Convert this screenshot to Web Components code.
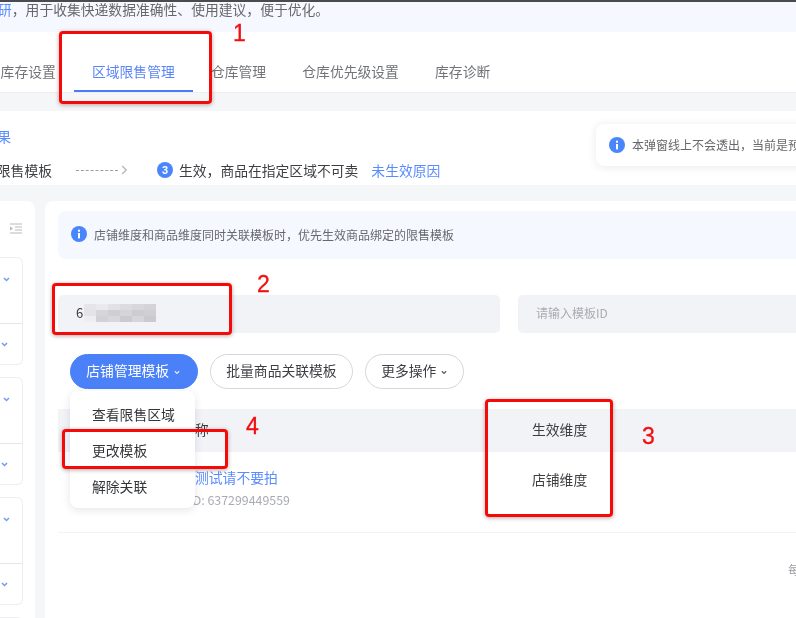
<!DOCTYPE html>
<html lang="zh-CN">
<head>
<meta charset="utf-8">
<title>区域限售管理</title>
<style>
  html, body { margin: 0; padding: 0; background: #f5f6f8; }
  body { font-family: "Noto Sans CJK SC", "Liberation Sans", sans-serif; }
</style>
</head>
<body>

<app-shell>
  <top-banner><a>研</a>，用于收集快递数据准确性、使用建议，便于优化。</top-banner>

  <tab-bar>
    <tab-item>库存设置</tab-item>
    <tab-item active>区域限售管理</tab-item>
    <tab-item>仓库管理</tab-item>
    <tab-item>仓库优先级设置</tab-item>
    <tab-item>库存诊断</tab-item>
  </tab-bar>

  <step-card></step-card>

  <content-row>
    <side-panel>
      <side-card></side-card>
      <side-card></side-card>
      <side-card></side-card>
      <side-card></side-card>
    </side-panel>
    <main-panel>
      <notice-bar>店铺维度和商品维度同时关联模板时，优先生效商品绑定的限售模板</notice-bar>
      <filter-row></filter-row>
      <action-row>
        <pill-btn primary caret>店铺管理模板</pill-btn>
        <pill-btn>批量商品关联模板</pill-btn>
        <pill-btn caret>更多操作</pill-btn>
      </action-row>
      <result-table></result-table>
    </main-panel>
  </content-row>

  <hint-card style="left:596px;top:124px">本弹窗线上不会透出，当前是预</hint-card>
  <drop-menu style="left:70px;top:391px">
    <span>查看限售区域</span>
    <span>更改模板</span>
    <span>解除关联</span>
  </drop-menu>

  <red-box style="left:59px;top:31px;width:153px;height:73px"></red-box>
  <red-num style="left:233px;top:20px">1</red-num>
  <red-box style="left:52px;top:283px;width:180px;height:52px"></red-box>
  <red-num style="left:257px;top:271px">2</red-num>
  <red-box style="left:485px;top:399px;width:128px;height:118px"></red-box>
  <red-num style="left:642px;top:423px">3</red-num>
  <red-box style="left:62px;top:429px;width:166px;height:40px"></red-box>
  <red-num style="left:246px;top:413px">4</red-num>
</app-shell>

<script>
const INFO_ICON = `<svg width="16" height="16" viewBox="0 0 16 16"><circle cx="8" cy="8" r="8" fill="#4a86fb"/><rect x="7" y="7" width="2" height="5.4" fill="#fff"/><rect x="7" y="3.7" width="2" height="2" fill="#fff"/></svg>`;
const CHEVRON = (c, w = 7) => `<svg width="${w}" height="5" viewBox="0 0 7 5"><path d="M1 1l2.5 2.5L6 1" fill="none" stroke="${c}" stroke-width="1.5"/></svg>`;

// small helper, every element is just a style + markup in an open shadow root
function define(name, html, setup) {
  customElements.define(name, class extends HTMLElement {
    constructor() {
      super();
      this.attachShadow({ mode: 'open' });
      this.shadowRoot.innerHTML = html;
    }
    connectedCallback() {
      if (setup) setup(this);
    }
  });
}

define('app-shell', `
  <style>
    :host {
      display: flex;
      flex-direction: column;
      position: relative;
      width: 796px;
      height: 618px;
      overflow: hidden;
      background: #f5f6f8;
      filter: blur(.4px);
    }
  </style>
  <slot></slot>
`);

define('top-banner', `
  <style>
    :host {
      display: block;
      flex: none;
      height: 30px;
      border-top: 2px solid #4b4b4d;
      background: #f5f8ff;
      color: #66686c;
      font-size: 13.8px;
      line-height: 15px;
      white-space: nowrap;
      overflow: hidden;
      text-indent: -2px;
    }
    ::slotted(a) { color: #5b8cff; }
  </style>
  <slot></slot>
`);

define('tab-bar', `
  <style>
    :host {
      display: flex;
      flex: none;
      height: 60px;
      margin-bottom: 18px;
      background: #fff;
      border-bottom: 1px solid #eceef1;
    }
    div { display: flex; margin-left: -17.5px; }
  </style>
  <div><slot></slot></div>
`);

define('tab-item', `
  <style>
    :host {
      display: flex;
      align-items: center;
      height: 60px;
      box-sizing: border-box;
      padding: 20px 18.1px 1px;
      font-size: 13.8px;
      color: #727478;
      white-space: nowrap;
      border-bottom: 2px solid transparent;
    }
    :host([active]) { color: #5b85f7; border-bottom-color: #4d79f6; }
  </style>
  <slot></slot>
`);

define('step-card', `
  <style>
    :host {
      display: block;
      flex: none;
      height: 74px;
      box-sizing: border-box;
      margin-bottom: 16px;
      padding-top: 15px;
      background: #fff;
      font-size: 13.8px;
      white-space: nowrap;
      overflow: hidden;
    }
    .title { color: #5b8cff; height: 21px; line-height: 21px; margin-left: -3px; width: 14px; overflow: hidden; direction: rtl; }
    .line { display: flex; align-items: center; height: 24px; margin-top: 11px; color: #3d3f43; }
    .first { width: 52px; overflow: hidden; direction: rtl; flex: none; }
    .dash { width: 42px; margin-left: 24px; border-top: 1.5px dashed #9b9da2; flex: none; }
    svg { margin-left: 3px; flex: none; }
    .num { width: 16px; height: 16px; margin-left: 29px; border-radius: 50%; background: #4a86fb; color: #fff;
      font: bold 11px/16px "Liberation Sans", sans-serif; text-align: center; flex: none; }
    .text { margin-left: 6px; flex: none; }
    a { margin-left: 13px; color: #5b8cff; }
  </style>
  <div class="title">果</div>
  <div class="line">
    <span class="first">限售模板</span>
    <span class="dash"></span>
    <svg width="7" height="10" viewBox="0 0 7 10"><path d="M1.2 1l4 4-4 4" fill="none" stroke="#b4b6bb" stroke-width="1.3"/></svg>
    <span class="num">3</span>
    <span class="text">生效，商品在指定区域不可卖</span>
    <a>未生效原因</a>
  </div>
`);

define('content-row', `
  <style>
    :host { display: flex; flex: 1; min-height: 0; gap: 10px; }
  </style>
  <slot></slot>
`);

define('side-panel', `
  <style>
    :host {
      display: flex;
      flex-direction: column;
      flex: none;
      width: 35px;
      box-sizing: border-box;
      gap: 12px;
      padding-top: 56px;
      position: relative;
      background: #fff;
      border-radius: 0 8px 0 0;
    }
    svg { position: absolute; left: 9px; top: 22px; }
  </style>
  <svg width="14" height="11" viewBox="0 0 14 11">
    <path d="M1 1h12M6 4h7M6 7h7M1 10h12" stroke="#b7b9bd" stroke-width="1"/>
    <path d="M1 3.5l3 2-3 2z" fill="#b7b9bd"/>
  </svg>
  <slot></slot>
`);

define('side-card', `
  <style>
    :host {
      display: block;
      flex: none;
      width: 23px;
      height: 108px;
      box-sizing: border-box;
      border: 1px solid #eceef1;
      border-left: none;
      border-radius: 0 6px 6px 0;
    }
    .top { height: 66px; display: flex; padding: 19px 0 0 3px; box-sizing: border-box; border-bottom: 1px solid #e4e6ea; }
    .bottom { padding: 18px 0 0 1px; display: flex; }
    svg { display: block; }
  </style>
  <div class="top">${CHEVRON('#6f9bfb')}</div>
  <div class="bottom">${CHEVRON('#6f9bfb')}</div>
`);

define('main-panel', `
  <style>
    :host {
      display: block;
      flex: 1;
      min-width: 0;
      box-sizing: border-box;
      padding: 10px 0 0 13px;
      background: #fff;
      border-radius: 8px 0 0 0;
      overflow: hidden;
    }
  </style>
  <slot></slot>
`);

define('notice-bar', `
  <style>
    :host {
      display: flex;
      align-items: center;
      gap: 7px;
      height: 48px;
      box-sizing: border-box;
      padding: 0 0 2px 13px;
      background: #f5f8ff;
      border-radius: 8px 0 0 8px;
      color: #66686c;
      font-size: 12px;
      white-space: nowrap;
    }
    svg { flex: none; }
  </style>
  ${INFO_ICON}<slot></slot>
`);

define('hint-card', `
  <style>
    :host {
      display: flex;
      position: absolute;
      align-items: center;
      gap: 7px;
      width: 220px;
      height: 42px;
      box-sizing: border-box;
      padding: 0 0 1px 13px;
      background: #fff;
      border-radius: 8px;
      box-shadow: 0 1px 8px rgba(30, 40, 70, .1);
      color: #66686c;
      font-size: 12px;
      white-space: nowrap;
    }
    svg { flex: none; }
  </style>
  ${INFO_ICON}<slot></slot>
`);

define('filter-row', `
  <style>
    :host { display: flex; gap: 18px; margin-top: 36px; }
    .field {
      display: flex;
      align-items: center;
      height: 38px;
      box-sizing: border-box;
      padding: 0 0 3px 18px;
      background: #f2f3f7;
      border-radius: 5px;
      font-size: 12px;
      flex: none;
    }
    .one { width: 442px; color: #3d3f43; font-size: 13px; }
    .two { width: 300px; color: #a9acb3; }
    .blur {
      display: grid;
      grid-template-columns: repeat(6, 12px);
      grid-auto-rows: 6px;
      width: 72px;
      height: 18px;
      margin-left: 1px;
    }
    .blur i { display: block; }
  </style>
  <div class="field one"><span>6</span><span class="blur">
    <i style="background:#e6e6ea"></i><i style="background:#eaeaed"></i><i style="background:#e2e2e6"></i><i style="background:#dcdce0"></i><i style="background:#d8d8dc"></i><i style="background:#d4d4d8"></i>
    <i style="background:#e4e4e8"></i><i style="background:#d6d6da"></i><i style="background:#cfcfd3"></i><i style="background:#d5d5d9"></i><i style="background:#cdcdd1"></i><i style="background:#d0d0d4"></i>
    <i style="background:#eeeef1"></i><i style="background:#d2d2d6"></i><i style="background:#d8d8dc"></i><i style="background:#cbcbcf"></i><i style="background:#d6d6da"></i><i style="background:#cbcbcf"></i>
  </span></div>
  <div class="field two">请输入模板ID</div>
`);

define('action-row', `
  <style>
    :host { display: flex; gap: 12px; margin: 21px 0 0 12px; }
  </style>
  <slot></slot>
`);

define('pill-btn', `
  <style>
    :host {
      display: flex;
      align-items: center;
      gap: 5px;
      height: 35px;
      box-sizing: border-box;
      padding: 0 15.3px 3px;
      border: 1px solid #d4d6dd;
      border-radius: 18px;
      background: #fff;
      color: #3d3f43;
      font-size: 13.8px;
      white-space: nowrap;
    }
    :host([primary]) { background: #4a80f8; border-color: #4a80f8; color: #fff; padding-right: 16.9px; }
    .caret { display: none; line-height: 0; padding-top: 3px; }
    :host([caret]) .caret { display: block; }
    svg path { stroke: #5a5c60; }
    :host([primary]) svg path { stroke: #dfe8ff; }
  </style>
  <slot></slot><span class="caret">${CHEVRON('#5a5c60', 6)}</span>
`);

define('result-table', `
  <style>
    :host { display: block; margin-top: 20px; font-size: 13.8px; color: #3d3f43; white-space: nowrap; }
    .head, .row { display: grid; grid-template-columns: 137px 337px 1fr; }
    .head { height: 43px; box-sizing: border-box; padding-bottom: 3px; background: #f2f3f7; align-items: center; }
    .row { height: 80px; border-bottom: 1px solid #f2f3f6; }
    .name { color: #5b8cff; line-height: 20px; padding-top: 15px; }
    .id { color: #a9acb3; font-size: 12.4px; line-height: 18px; margin: 4px 0 0 -6px; }
    .dim { padding-top: 17px; line-height: 20px; }
    .pager { margin-top: 28px; padding-left: 730px; color: #9b9da2; font-size: 12px; }
  </style>
  <div class="head"><div></div><div>称</div><div>生效维度</div></div>
  <div class="row">
    <div></div>
    <div><div class="name">测试请不要拍</div><div class="id">ID: 637299449559</div></div>
    <div class="dim">店铺维度</div>
  </div>
  <div class="pager">每</div>
`);

define('drop-menu', `
  <style>
    :host {
      display: flex;
      flex-direction: column;
      position: absolute;
      width: 125px;
      height: 117px;
      box-sizing: border-box;
      padding: 5px 0 0 22px;
      background: #fff;
      border-radius: 8px;
      box-shadow: 0 2px 8px rgba(30, 40, 70, .12);
      color: #333538;
      font-size: 13.8px;
    }
    ::slotted(span) { display: block; height: 36px; line-height: 36px; white-space: nowrap; }
  </style>
  <slot></slot>
`);

define('red-box', `
  <style>
    :host {
      display: block;
      position: absolute;
      box-sizing: border-box;
      border: 3px solid #f50a0a;
      border-radius: 4px;
      box-shadow: 0 1px 4px rgba(60, 0, 0, .35);
    }
  </style>
`);

define('red-num', `
  <style>
    :host {
      display: block;
      position: absolute;
      color: #f20f0f;
      font: 23px/26px "Liberation Sans", sans-serif;
      -webkit-text-stroke: .3px #f20f0f;
    }
  </style>
  <slot></slot>
`);
</script>
</body>
</html>
